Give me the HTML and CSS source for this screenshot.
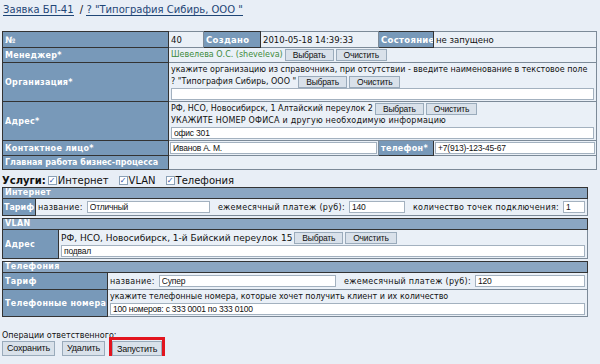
FILE: index.html
```html
<!DOCTYPE html>
<html lang="ru">
<head>
  <meta charset="UTF-8">
  <title>Заявка БП-41</title>
  <link rel="stylesheet" href="styles.css">
</head>
<body>
  <div class="title"><a href="#">Заявка БП-41</a>&nbsp; / <a href="#">? "Типография Сибирь, ООО "</a></div>

  <table class="main">
    <colgroup>
      <col style="width:166px"><col style="width:35px"><col style="width:57px"><col style="width:118px"><col style="width:55px"><col>
    </colgroup>
    <tr class="r16">
      <th>№</th><td>40</td><th>Создано</th><td>2010-05-18 14:39:33</td><th>Состояние</th><td>не запущено</td>
    </tr>
    <tr>
      <th>Менеджер*</th>
      <td colspan="5"><div class="line"><span class="green">Шевелева О.С. (sheveleva)</span><button class="btn">Выбрать</button><button class="btn">Очистить</button></div></td>
    </tr>
    <tr>
      <th>Организация*</th>
      <td colspan="5">
        <div class="line">укажите организацию из справочника, при отсутствии - введите наименование в текстовое поле</div>
        <div class="line">? "Типография Сибирь, ООО "<button class="btn">Выбрать</button><button class="btn">Очистить</button></div>
        <input class="inp full" type="text" value="">
      </td>
    </tr>
    <tr>
      <th>Адрес*</th>
      <td colspan="5">
        <div class="line">РФ, НСО, Новосибирск, 1 Алтайский переулок 2<button class="btn">Выбрать</button><button class="btn">Очистить</button></div>
        <div class="line note">УКАЖИТЕ НОМЕР ОФИСА и другую необходимую информацию</div>
        <input class="inp full" type="text" value="офис 301">
      </td>
    </tr>
    <tr>
      <th>Контактное лицо*</th>
      <td colspan="3" class="tight"><input class="inp full" type="text" value="Иванов А. М."></td>
      <th>телефон*</th>
      <td class="tight"><input class="inp full" type="text" value="+7(913)-123-45-67"></td>
    </tr>
    <tr class="r14">
      <th class="narrow">Главная работа бизнес-процесса</th><td colspan="5"></td>
    </tr>
  </table>

  <div class="services">
    <b>Услуги:</b>
    <label><span class="check">&#10003;</span>Интернет</label>
    <label><span class="check">&#10003;</span>VLAN</label>
    <label><span class="check">&#10003;</span>Телефония</label>
  </div>

  <table class="sub">
    <colgroup><col style="width:33px"><col></colgroup>
    <tr><th class="bar" colspan="2">Интернет</th></tr>
    <tr>
      <th class="narrow compact">Тариф</th>
      <td>
        <div class="fields">
          <span class="lbl">название:</span><input class="inp" style="width:150px" type="text" value="Отличный">
          <span class="lbl gapl">ежемесячный платеж (руб):</span><input class="inp" style="width:56px" type="text" value="140">
          <span class="lbl gapl">количество точек подключения:</span><input class="inp" style="width:22px" type="text" value="1">
        </div>
      </td>
    </tr>
  </table>

  <table class="sub">
    <colgroup><col style="width:56px"><col></colgroup>
    <tr><th class="bar" colspan="2">VLAN</th></tr>
    <tr>
      <th>Адрес</th>
      <td>
        <div class="line big">РФ, НСО, Новосибирск, 1-й Бийский переулок 15<button class="btn">Выбрать</button><button class="btn">Очистить</button></div>
        <input class="inp full" type="text" value="подвал">
      </td>
    </tr>
  </table>

  <table class="sub">
    <colgroup><col style="width:105px"><col></colgroup>
    <tr><th class="bar" colspan="2">Телефония</th></tr>
    <tr>
      <th>Тариф</th>
      <td>
        <div class="fields">
          <span class="lbl">название:</span><input class="inp" style="width:182px" type="text" value="Супер">
          <span class="lbl gapl">ежемесячный платеж (руб):</span><input class="inp" style="width:110px" type="text" value="120">
        </div>
      </td>
    </tr>
    <tr>
      <th>Телефонные номера</th>
      <td>
        <div class="line">укажите телефонные номера, которые хочет получить клиент и их количество</div>
        <input class="inp full" type="text" value="100 номеров: с 333 0001 по 333 0100">
      </td>
    </tr>
  </table>

  <div class="ops">
    <div class="ops-title">Операции ответственного:</div>
    <div class="ops-buttons">
      <button class="btn big">Сохранить</button>
      <button class="btn big">Удалить</button>
      <span class="marked"><button class="btn big">Запустить</button></span>
    </div>
  </div>
</body>
</html>
```

FILE: styles.css
```css
body {
  margin: 0;
  padding: 0 3px 0 2px;
  background-color: #e8eef6;
  font-family: "DejaVu Sans", Verdana, sans-serif;
  font-size: 8px;
  color: #111;
}
.title {
  padding: 4px 1px 0;
  height: 27px;
  font-size: 10px;
}
.title a {
  color: #1f4676;
  text-decoration: none;
  border-bottom: 1px solid #1f4676;
}
table {
  border-collapse: collapse;
  table-layout: fixed;
}
.main {
  width: 595px;
  border: 1px solid #333;
}
th, td {
  padding: 1px 2px;
  text-align: left;
  vertical-align: middle;
  overflow: hidden;
  white-space: nowrap;
}
th {
  background-color: #7899b9;
  color: #fff;
  font-weight: bold;
  border: 1px solid #333;
  letter-spacing: 0.3px;
}
th.narrow {
  letter-spacing: 0;
}
th.compact {
  padding: 1px 1px;
}
td {
  background-color: #eaf0f7;
  border: 1px solid #7c8a98;
}
.main tr.r16 td, .main tr.r16 th {
  height: 13px;
  font-size: 8.5px;
}
.main tr.r14 td, .main tr.r14 th {
  height: 11px;
}
td.tight {
  padding: 1px;
}
.green {
  color: #3d8a3d;
}
.line {
  height: 12px;
  line-height: 12px;
  display: flex;
  align-items: center;
}
.line.note {
  letter-spacing: 0.2px;
}
.line.big {
  font-size: 9px;
  height: 14px;
}
.btn {
  font-family: "Liberation Sans", Arial, sans-serif;
  font-size: 8.5px;
  letter-spacing: -0.2px;
  height: 12px;
  line-height: 10px;
  padding: 0 7px;
  margin-left: 2px;
  background-color: #d9e1ea;
  border: 1px solid #9aabbb;
  color: #111;
}
.inp {
  box-sizing: border-box;
  height: 12px;
  font-family: "Liberation Sans", Arial, sans-serif;
  font-size: 8.5px;
  letter-spacing: -0.2px;
  padding: 0 2px;
  margin: 0;
  background-color: #fff;
  border: 1px solid #a3b1bf;
  color: #111;
}
.inp.full {
  display: block;
  width: 100%;
}
.services {
  margin-top: 4px;
  height: 13px;
  display: flex;
  align-items: center;
  font-size: 10px;
}
.services b {
  margin-right: 2px;
}
.services label {
  display: flex;
  align-items: center;
  margin-right: 10px;
}
.check {
  display: inline-block;
  box-sizing: border-box;
  width: 9px;
  height: 9px;
  margin-right: 1px;
  border: 1px solid #8aa0b6;
  background-color: #fff;
  color: #2b55a8;
  font-size: 8px;
  line-height: 7px;
  text-align: center;
  font-weight: bold;
}
.sub {
  width: 586px;
  border: 1px solid #333;
  margin-bottom: 2px;
}
.sub th.bar {
  background-color: #8ba6c2;
  height: 8px;
  line-height: 8px;
  border-bottom: 1px solid #333;
}
.fields {
  display: flex;
  align-items: center;
  height: 14px;
}
.lbl {
  margin-right: 4px;
  letter-spacing: 0.3px;
}
.gapl {
  margin-left: 8px;
}
.ops {
  margin-top: 14px;
}
.ops-title {
  height: 9px;
  line-height: 9px;
}
.ops-buttons {
  display: flex;
  align-items: center;
  gap: 7px;
}
.btn.big {
  margin-left: 0;
  height: 15px;
  font-size: 9px;
  padding: 0 4px;
}
.marked {
  border: 3px solid #e2141e;
  padding: 1px 0 0;
  margin: -3px -3px -3px -3px;
}
```
